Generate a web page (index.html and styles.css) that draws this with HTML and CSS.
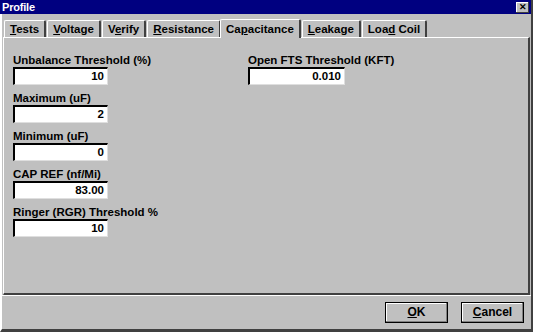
FILE: index.html
```html
<!DOCTYPE html>
<html lang="en">
<head>
  <meta charset="UTF-8">
  <title>Profile</title>
  <link rel="stylesheet" href="styles.css">
</head>
<body>

<div class="window">
  <div class="titlebar">
    <span class="title">Profile</span>
    <span class="close">&#x2715;</span>
  </div>

  <div class="tabs">
    <div class="tab"><u>T</u>ests</div>
    <div class="tab"><u>V</u>oltage</div>
    <div class="tab">V<u>e</u>rify</div>
    <div class="tab"><u>R</u>esistance</div>
    <div class="tab active">Ca<u>p</u>acitance</div>
    <div class="tab"><u>L</u>eakage</div>
    <div class="tab">Loa<u>d</u> Coil</div>
  </div>

  <div class="panel">
    <div class="column">
      <div class="field">
        <label>Unbalance Threshold (%)</label>
        <div class="input">10</div>
      </div>
      <div class="field">
        <label>Maximum (uF)</label>
        <div class="input">2</div>
      </div>
      <div class="field">
        <label>Minimum (uF)</label>
        <div class="input">0</div>
      </div>
      <div class="field">
        <label>CAP REF (nf/Mi)</label>
        <div class="input">83.00</div>
      </div>
      <div class="field">
        <label>Ringer (RGR) Threshold %</label>
        <div class="input">10</div>
      </div>
    </div>
    <div class="column right">
      <div class="field">
        <label>Open FTS Threshold (KFT)</label>
        <div class="input">0.010</div>
      </div>
    </div>
  </div>

  <div class="buttons">
    <div class="btn"><u>O</u>K</div>
    <div class="btn"><u>C</u>ancel</div>
  </div>
</div>

</body>
</html>
```

FILE: styles.css
```css
body {
  margin: 0;
  background: #c0c0c0;
  font-family: "Liberation Sans", Arial, sans-serif;
  font-size: 11px;
  font-weight: bold;
  color: #000;
}

.window {
  width: 533px;
  height: 332px;
  box-sizing: border-box;
  border-left: 2px solid #fff;
  border-right: 2px solid #404040;
  border-bottom: 3px solid #404040;
  display: flex;
  flex-direction: column;
  background: #c0c0c0;
}

/* Title bar */
.titlebar {
  height: 14px;
  background: #000080;
  color: #fff;
  display: flex;
  align-items: center;
  justify-content: space-between;
  padding: 0 2px 0 2px;
  margin-left: -2px;
}

.title {
  font-size: 11px;
  letter-spacing: -0.2px;
}

.close {
  width: 13px;
  height: 11px;
  background: #c0c0c0;
  color: #000;
  font-size: 9px;
  line-height: 11px;
  text-align: center;
  box-shadow: inset -1px -1px #404040, inset 1px 1px #fff;
}

/* Tabs */
.tabs {
  display: flex;
  align-items: flex-end;
  height: 20px;
  margin-top: 3px;
  padding-left: 2px;
}

.tab {
  height: 16px;
  line-height: 16px;
  padding: 0 5px;
  font-size: 11.5px;
  border-top: 1px solid #fff;
  border-left: 1px solid #fff;
  border-right: 2px solid #404040;
  border-radius: 2px 2px 0 0;
  margin-right: 1px;
}

.tab.active {
  height: 18px;
  line-height: 18px;
  padding: 0 5px;
  margin: 0 1px -1px -2px;
  background: #c0c0c0;
  position: relative;
  z-index: 1;
}

/* Panel */
.panel {
  flex: 1;
  margin: 0 1px 0 1px;
  border-top: 1px solid #fff;
  border-left: 1px solid #fff;
  border-right: 2px solid #404040;
  border-bottom: 2px solid #404040;
  display: grid;
  grid-template-columns: 235px auto;
  align-items: start;
  padding: 16px 0 0 9px;
}

.column {
  display: flex;
  flex-direction: column;
  gap: 7px;
}

.field label {
  display: block;
  font-size: 11.5px;
  line-height: 13px;
}

.input {
  width: 95px;
  height: 18px;
  box-sizing: border-box;
  background: #fff;
  border-top: 2px solid #000;
  border-left: 2px solid #000;
  border-right: 1px solid #dfdfdf;
  border-bottom: 1px solid #dfdfdf;
  text-align: right;
  padding-right: 3px;
  line-height: 15px;
  font-size: 11.5px;
}

.column.right .input {
  width: 97px;
}

/* Buttons */
.buttons {
  display: flex;
  justify-content: flex-end;
  gap: 13px;
  padding: 6px 7px 0 0;
  height: 34px;
  box-sizing: border-box;
  border-top: 1px solid #fff;
}

.btn {
  width: 63px;
  height: 21px;
  box-sizing: border-box;
  text-align: center;
  line-height: 19px;
  font-size: 12px;
  border: 1px solid #000;
  box-shadow: inset -1px -1px #808080, inset 1px 1px #fff;
}
```
